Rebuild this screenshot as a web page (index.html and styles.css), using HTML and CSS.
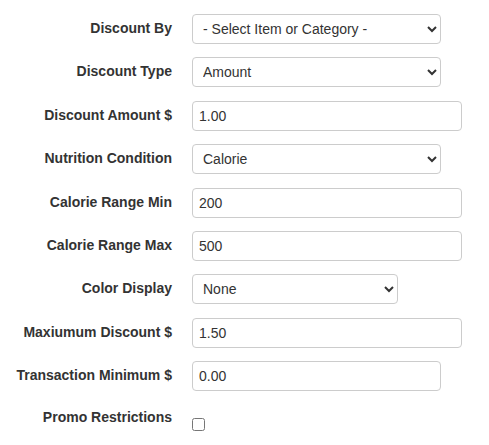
FILE: index.html
```html
<!DOCTYPE html>
<html lang="en">
<head>
<meta charset="UTF-8">
<meta name="viewport" content="width=device-width, initial-scale=1.0">
<title>Promo Discount</title>
<link rel="stylesheet" href="styles.css">
</head>
<body>
<form class="promo-form">
    <div class="form-row">
        <label for="discountBy">Discount By</label>
        <select id="discountBy" class="field w-md">
            <option>- Select Item or Category -</option>
        </select>
    </div>
    <div class="form-row">
        <label for="discountType">Discount Type</label>
        <select id="discountType" class="field w-md">
            <option>Amount</option>
        </select>
    </div>
    <div class="form-row">
        <label for="discountAmount">Discount Amount $</label>
        <input type="text" id="discountAmount" class="field w-lg" value="1.00">
    </div>
    <div class="form-row">
        <label for="nutrition">Nutrition Condition</label>
        <select id="nutrition" class="field w-md">
            <option>Calorie</option>
        </select>
    </div>
    <div class="form-row">
        <label for="calMin">Calorie Range Min</label>
        <input type="text" id="calMin" class="field w-lg" value="200">
    </div>
    <div class="form-row">
        <label for="calMax">Calorie Range Max</label>
        <input type="text" id="calMax" class="field w-lg" value="500">
    </div>
    <div class="form-row">
        <label for="colorDisplay">Color Display</label>
        <select id="colorDisplay" class="field w-sm">
            <option>None</option>
        </select>
    </div>
    <div class="form-row">
        <label for="maxDiscount">Maxiumum Discount $</label>
        <input type="text" id="maxDiscount" class="field w-lg" value="1.50">
    </div>
    <div class="form-row">
        <label for="txnMin">Transaction Minimum $</label>
        <input type="text" id="txnMin" class="field w-md" value="0.00">
    </div>
    <div class="form-row check-row">
        <label for="restrictions">Promo Restrictions</label>
        <div class="check-cell">
            <input type="checkbox" id="restrictions">
        </div>
    </div>
</form>
</body>
</html>
```

FILE: styles.css
```css
body {
    font-family: Arial, "Liberation Sans", sans-serif;
    font-size: 14px;
    color: #333;
    margin: 0;
    padding: 14px 8px 0 8px;
    background-color: #fff;
}
.promo-form {
    display: flex;
    flex-direction: column;
    gap: 13.4px;
}
.form-row {
    display: grid;
    grid-template-columns: 164px 1fr;
    column-gap: 20px;
    align-items: start;
}
.form-row label {
    font-weight: bold;
    text-align: right;
    padding-top: 4px;
    line-height: 20px;
}
.field {
    height: 30px;
    border: 1px solid #ccc;
    border-radius: 4px;
    box-sizing: border-box;
    font-family: Arial, "Liberation Sans", sans-serif;
    font-size: 14px;
    color: #333;
    background-color: #fff;
    padding: 0 6px;
    margin: 0;
}
select.field {
    padding-left: 6px;
}
.w-sm {
    width: 206px;
}
.w-md {
    width: 249px;
}
.w-lg {
    width: 270px;
}
.check-row label {
    padding-top: 2px;
}
.check-cell input {
    width: 13px;
    height: 13px;
    margin: 13px 0 0 0;
}
```
